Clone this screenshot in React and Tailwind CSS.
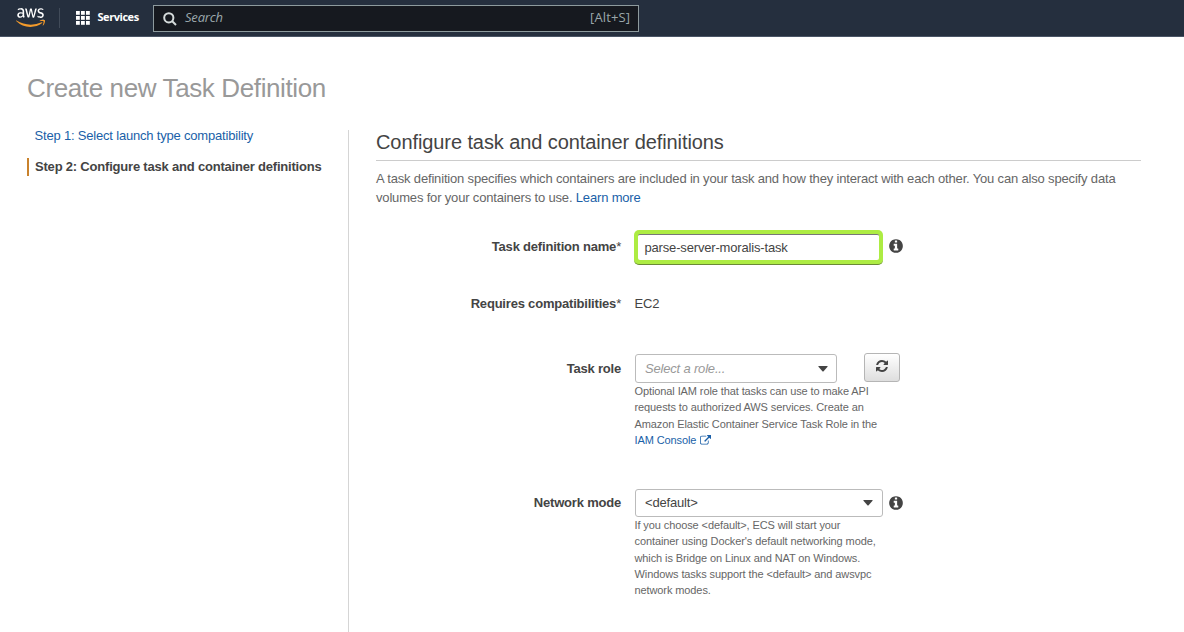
import React from "react";
import { FaAws } from "react-icons/fa";

const INFO =
  "M1152 1376v-160q0-14-9-23t-23-9h-96v-512q0-14-9-23t-23-9h-320q-14 0-23 9t-9 23v160q0 14 9 23t23 9h96v320h-96q-14 0-23 9t-9 23v160q0 14 9 23t23 9h448q14 0 23-9t9-23zm-128-896v-160q0-14-9-23t-23-9h-192q-14 0-23 9t-9 23v160q0 14 9 23t23 9h192q14 0 23-9t9-23zm640 416q0 209-103 385.5t-279.5 279.5-385.5 103-385.5-103-279.5-279.5-103-385.5 103-385.5 279.5-279.5 385.5-103 385.5 103 279.5 279.5 103 385.5z";
const REFRESH =
  "M1639 1056q0 5-1 7-64 268-268 434.5t-478 166.5q-146 0-282.5-55t-243.5-157l-129 129q-19 19-45 19t-45-19-19-45v-448q0-26 19-45t45-19h448q26 0 45 19t19 45-19 45l-137 137q71 66 161 102t187 36q134 0 250-65t186-179q11-17 53-117 8-23 30-23h192q13 0 22.5 9.5t9.5 22.5zm25-800v448q0 26-19 45t-45 19h-448q-26 0-45-19t-19-45 19-45l138-138q-148-137-349-137-134 0-250 65t-186 179q-11 17-53 117-8 23-30 23h-199q-13 0-22.5-9.5t-9.5-22.5v-7q65-268 270-434.5t480-166.5q146 0 284 55.5t245 156.5l130-129q19-19 45-19t45 19 19 45z";
const EXTERNAL =
  "M1408 928v320q0 119-84.5 203.5t-203.5 84.5h-832q-119 0-203.5-84.5t-84.5-203.5v-832q0-119 84.5-203.5t203.5-84.5h704q14 0 23 9t9 23v64q0 14-9 23t-23 9h-704q-66 0-113 47t-47 113v832q0 66 47 113t113 47h832q66 0 113-47t47-113v-320q0-14 9-23t23-9h64q14 0 23 9t9 23zm384-864v512q0 26-19 45t-45 19-45-19l-176-176-652 652q-10 10-23 10t-23-10l-114-114q-10-10-10-23t10-23l652-652-176-176q-19-19-19-45t19-45 45-19h512q26 0 45 19t19 45z";

function Icon({ d, className }) {
  return (
    <svg viewBox="0 0 1792 1792" fill="currentColor" className={className}>
      <path d={d} />
    </svg>
  );
}

function Caret() {
  return (
    <svg viewBox="0 0 10 6" className="h-[6px] w-[10px] fill-[#444]">
      <path d="M0.8 0h8.4q0.8 0 0.3 0.8L5.6 5.3q-0.6 0.6-1.2 0L0.5 0.8Q0 0 0.8 0z" />
    </svg>
  );
}

function TopBar() {
  return (
    <header className="flex h-[37px] items-start border-b border-[#4a5566] bg-[#252f3e] font-['Open_Sans',sans-serif]">
      <svg width="0" height="0" className="absolute">
        <linearGradient id="aws" x1="0" y1="0" x2="0" y2="1">
          <stop offset="0.62" stopColor="#fff" />
          <stop offset="0.62" stopColor="#f39a2b" />
        </linearGradient>
      </svg>
      <FaAws
        className="mt-[5px] ml-[15.5px] h-[25px] w-[29px]"
        preserveAspectRatio="none"
        style={{ fill: "url(#aws)" }}
      />
      <div className="mt-2 ml-[14.5px] h-5 w-px bg-[#414b59]" />
      <svg viewBox="0 0 14 14" className="mt-[11px] ml-4 size-[14px] fill-white">
        {[0, 5, 10].map((y) => [0, 5, 10].map((x) => <rect key={`${x}-${y}`} x={x} y={y} width="3.8" height="3.8" />))}
      </svg>
      <span className="mt-[9px] ml-[7.5px] w-[55.5px] text-[11px] leading-4 font-bold tracking-[-0.45px] text-white">
        Services
      </span>
      <div className="mt-[5px] flex h-[27px] w-[486px] items-center border border-[#8d9a9d] bg-[#16191f] pr-2 pl-[9px] text-[#9ba7ab]">
        <svg viewBox="0 0 14 14" className="size-[14px] fill-none stroke-[#d5dbdb] stroke-2">
          <circle cx="5.8" cy="5.8" r="4.6" />
          <path d="M9 9L13 13" />
        </svg>
        <span className="ml-2 flex-1 pb-px text-[13px] tracking-[-0.2px] italic">Search</span>
        <span className="pb-px text-[13px] tracking-[0.1px]">[Alt+S]</span>
      </div>
    </header>
  );
}

function Label({ children, required }) {
  return (
    <div className="w-[245px] text-right leading-[18px] font-bold tracking-[-0.2px] text-[#444]">
      {children}
      {required && <span className="font-normal">*</span>}
    </div>
  );
}

export default function App() {
  return (
    <div className="h-[632px] w-[1184px] overflow-hidden bg-white font-['Liberation_Sans',Arial,sans-serif] text-[13px] tracking-[-0.18px] whitespace-nowrap text-[#444]">
      <TopBar />
      <h1 className="mt-9 ml-[27px] text-[26px] leading-[30px] tracking-[-0.38px] text-[#999]">
        Create new Task Definition
      </h1>
      <div className="mt-[27px] flex h-[502px]">
        <nav className="w-[349px] border-r border-[#d5d5d5] pl-[27px]">
          <div className="pl-[7.5px] leading-[12px] tracking-[-0.19px] text-[#1a5fa8]">
            Step 1: Select launch type compatibility
          </div>
          <div className="mt-4 flex h-[18px] items-center border-l-2 border-[#c9822c] pl-[6px] font-bold tracking-[-0.2px]">
            Step 2: Configure task and container definitions
          </div>
        </nav>
        <main className="ml-[27px] w-[765px]">
          <h2 className="h-[31px] border-b border-[#ccc] text-[20px] leading-[24px] tracking-[-0.09px]">
            Configure task and container definitions
          </h2>
          <p className="mt-2 leading-[19px] tracking-[-0.17px] text-[#666]">
            A task definition specifies which containers are included in your task and how they interact with each
            other. You can also specify data
            <br />
            volumes for your containers to use. <a className="text-[#1a5fa8]">Learn more</a>
          </p>

          <div className="mt-[23px] flex h-[35px]">
            <div className="pt-2">
              <Label required>Task definition name</Label>
            </div>
            <div className="ml-[13px] flex h-[35px] w-[249px] rounded-[5px] border-b border-[#6b8a35] bg-[#adec43] p-1">
              <div className="flex flex-1 items-center rounded-[2px] border-t border-[#777] bg-white pl-[6.5px] tracking-[-0.17px]">
                parse-server-moralis-task
              </div>
            </div>
            <Icon d={INFO} className="mt-2 ml-[5px] size-[16px]" />
          </div>

          <div className="mt-[30px] flex">
            <Label required>Requires compatibilities</Label>
            <span className="ml-[13.5px] leading-[18px]">EC2</span>
          </div>

          <div className="mt-[40px] flex h-[95px]">
            <div className="pt-[7px]">
              <Label>Task role</Label>
            </div>
            <div className="ml-[14px] w-[202px]">
              <div className="mt-px flex h-[29px] items-center justify-between rounded-[3px] border border-[#bbb] pr-2 pl-[9px]">
                <span className="text-[#999] italic">Select a role...</span>
                <Caret />
              </div>
              <p className="-ml-[0.5px] text-[11px] leading-[16.3px] tracking-[-0.1px] text-[#666]">
                Optional IAM role that tasks can use to make API
                <br />
                requests to authorized AWS services. Create an
                <br />
                Amazon Elastic Container Service Task Role in the
                <br />
                <a className="inline-flex items-center text-[#1a5fa8]">
                  IAM Console <Icon d={EXTERNAL} className="mt-px ml-[3.5px] size-[11px]" />
                </a>
              </p>
            </div>
            <div className="ml-[27px] flex h-[29px] w-9 items-center justify-center rounded-[3px] border border-[#b5b5b5] bg-linear-to-b from-white to-[#dedede] pb-[3px]">
              <Icon d={REFRESH} className="size-[14px]" />
            </div>
          </div>

          <div className="mt-[41px] flex">
            <div className="pt-[5px]">
              <Label>Network mode</Label>
            </div>
            <div className="ml-[14px] w-[248px]">
              <div className="flex h-[28px] items-center justify-between rounded-[3px] border border-[#bbb] pr-[9px] pl-[9px]">
                <span>&lt;default&gt;</span>
                <Caret />
              </div>
              <p className="-ml-[0.5px] text-[11px] leading-[16.25px] tracking-[-0.1px] text-[#666]">
                If you choose &lt;default&gt;, ECS will start your
                <br />
                container using Docker's default networking mode,
                <br />
                which is Bridge on Linux and NAT on Windows.
                <br />
                Windows tasks support the &lt;default&gt; and awsvpc
                <br />
                network modes.
              </p>
            </div>
            <Icon d={INFO} className="mt-[6px] ml-[5px] size-[16px]" />
          </div>
        </main>
      </div>
    </div>
  );
}
